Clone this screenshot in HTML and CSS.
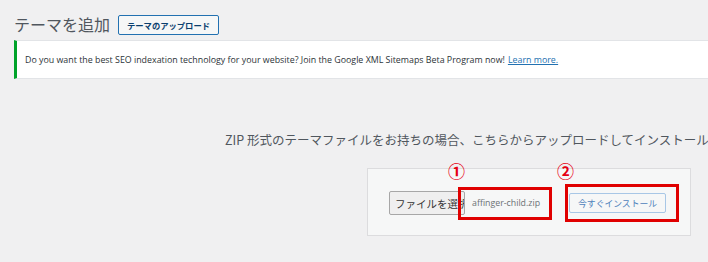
FILE: index.html
```html
<!DOCTYPE html>
<html lang="ja">
<head>
  <meta charset="UTF-8">
  <title>テーマを追加</title>
  <link rel="stylesheet" href="styles.css">
</head>
<body>
  <div class="wrap">
    <div class="title-row">
      <h1>テーマを追加</h1>
      <button class="upload-toggle">テーマのアップロード</button>
    </div>

    <div class="notice">
      Do you want the best SEO indexation technology for your website? Join the Google XML Sitemaps Beta Program now!
      <a href="#">Learn more.</a>
    </div>
  </div>

  <div class="upload-theme">
    <p class="install-help">ZIP 形式のテーマファイルをお持ちの場合、こちらからアップロードしてインストールできます。</p>

    <form class="upload-form">
      <span class="file-btn">ファイルを選択</span>
      <span class="file-name">affinger-child.zip</span>
      <button type="button" class="install-btn">今すぐインストール</button>

      <span class="mark mark-1">①</span>
      <span class="mark mark-2">②</span>
      <span class="red-box box-1"></span>
      <span class="red-box box-2"></span>
    </form>
  </div>
</body>
</html>
```

FILE: styles.css
```css
body {
  margin: 0;
  background-color: #f0f0f1;
  font-family: 'Open Sans', 'Noto Sans CJK JP', sans-serif;
  color: #3c434a;
  overflow: hidden;
}

.wrap {
  padding: 13px 0 0 14px;
}

.title-row {
  display: flex;
  align-items: center;
  gap: 8px;
  height: 22px;
}

h1 {
  margin: 0;
  font-size: 16px;
  font-weight: 400;
  color: #50575e;
  font-family: 'Noto Sans CJK JP', sans-serif;
}

.upload-toggle {
  height: 20px;
  width: 101px;
  padding: 0;
  margin-top: 2px;
  border: 1px solid #2271b1;
  border-radius: 2px;
  background-color: #f6f7f7;
  color: #0a3f6e;
  font-family: 'Noto Sans CJK JP', sans-serif;
  font-size: 8.3px;
  font-weight: 700;
}

.notice {
  margin: 5px -20px 0 0;
  height: 39px;
  box-sizing: border-box;
  display: flex;
  align-items: center;
  gap: 3px;
  padding-left: 8px;
  background-color: #ffffff;
  border: 1px solid #e2e4e7;
  border-left: 3px solid #00a32a;
  font-size: 8.85px;
  color: #2c3338;
  white-space: nowrap;
}

.notice a {
  color: #2271b1;
}

.upload-theme {
  padding-top: 51px;
}

.install-help {
  margin: 0;
  padding-left: 225px;
  font-family: 'Noto Sans CJK JP', sans-serif;
  font-size: 12.5px;
  line-height: 20px;
  color: #50575e;
  white-space: nowrap;
  overflow: hidden;
}

.upload-form {
  position: relative;
  margin: 18px 0 0 367px;
  width: 324px;
  height: 68px;
  box-sizing: border-box;
  display: flex;
  align-items: center;
  padding: 2px 0 0 21px;
  background-color: #f6f7f7;
  border: 1px solid #dcdcde;
}

.file-btn {
  height: 24px;
  width: 76px;
  box-sizing: border-box;
  display: flex;
  align-items: center;
  padding-left: 5px;
  background-color: #efefef;
  border: 1px solid #a7a7a7;
  border-radius: 2px;
  font-family: 'Noto Sans CJK JP', sans-serif;
  font-size: 10.5px;
  color: #333333;
  overflow: hidden;
  white-space: nowrap;
}

.file-name {
  margin-left: 7px;
  font-size: 8.8px;
  color: #6c7175;
}

.install-btn {
  margin-left: 29px;
  height: 20px;
  width: 97px;
  padding: 0;
  border: 1px solid #a8c7e6;
  border-radius: 2px;
  background-color: #f6f7f7;
  color: #4f82bb;
  font-family: 'Noto Sans CJK JP', sans-serif;
  font-size: 8.8px;
}

.mark {
  position: absolute;
  top: -7px;
  color: #e60012;
  font-family: 'Noto Sans CJK JP', sans-serif;
  font-size: 17px;
  font-weight: 700;
  line-height: 17px;
}

.mark-1 {
  left: 80px;
}

.mark-2 {
  left: 189px;
}

.red-box {
  position: absolute;
  border: 3px solid #e00000;
  box-sizing: border-box;
}

.box-1 {
  left: 90px;
  top: 18px;
  width: 94px;
  height: 33px;
}

.box-2 {
  left: 197px;
  top: 15px;
  width: 114px;
  height: 38px;
}
```
